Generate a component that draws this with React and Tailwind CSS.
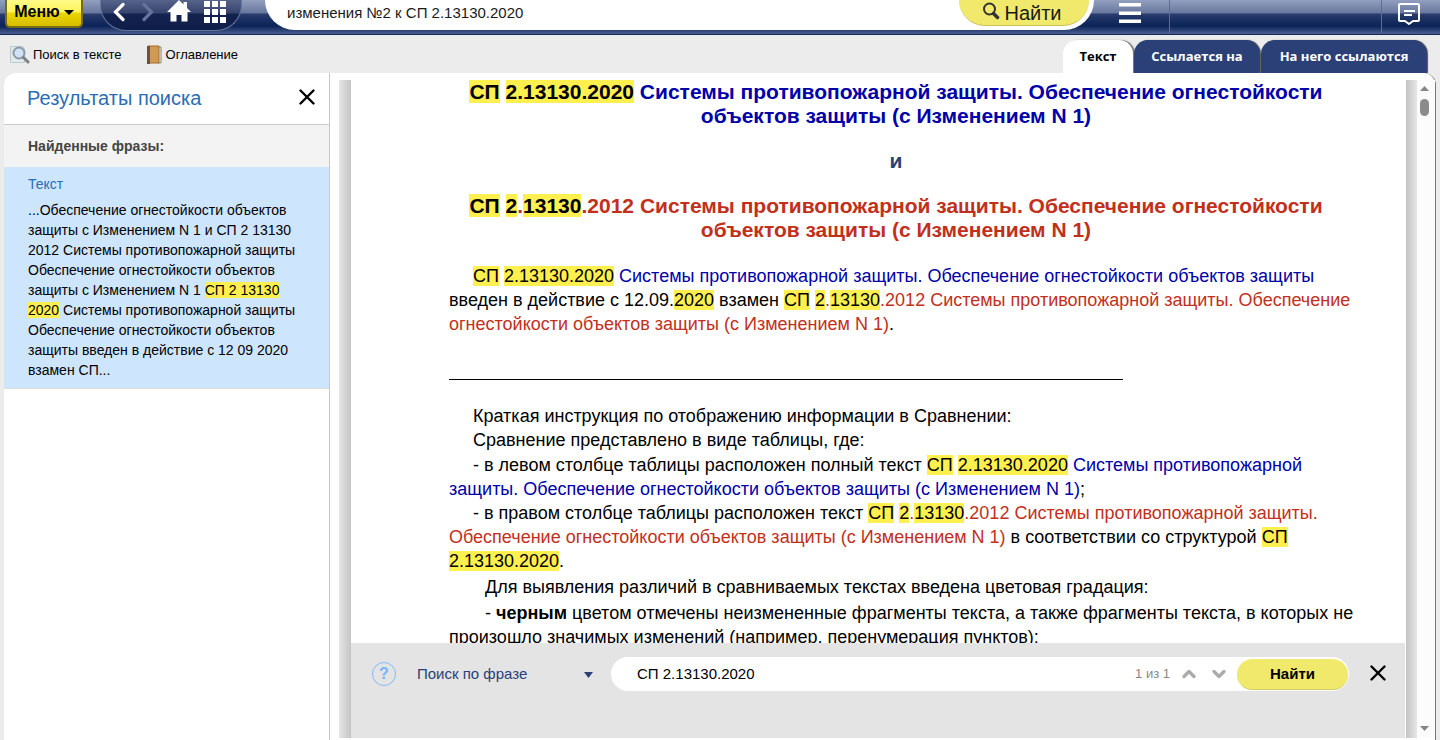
import { ChevronDown, ChevronUp } from 'lucide-react';

const LinkBlue = ({ children }) => (
    <a href="#sp2020" className="text-[#0000aa]">{children}</a>
);

const LinkRed = ({ children }) => (
    <a href="#sp2012" className="text-[#c2301c]">{children}</a>
);

const Mark = ({ children }) => <mark className="bg-[#fff04f] text-black">{children}</mark>;

const Sp2020 = () => (
    <><Mark>СП</Mark> <Mark>2.13130.2020</Mark></>
);

const Sp2012 = () => (
    <><Mark>СП</Mark> <Mark>2</Mark>.<Mark>13130</Mark>.2012</>
);

const CloseIcon = () => (
    <svg width="16" height="16" viewBox="0 0 16 16" fill="none" stroke="#000" strokeWidth="2.4" strokeLinecap="round">
        <path d="M1.5 1.5 14.5 14.5M14.5 1.5 1.5 14.5" />
    </svg>
);

const Header = () => (
    <header className="h-[35px] shrink-0 flex items-start overflow-hidden border-b border-[#14285c] bg-[linear-gradient(to_bottom,#929fbf_0px,#68779e_13px,#293c6d_14px,#0b2357_26px,#2b4073_30px,#4c608f_34px)]">
        <button className="ml-[5px] w-[78px] h-7 shrink-0 flex items-center justify-center gap-1 rounded-b-[5px] border-2 border-t-0 border-[#766c12] pb-0.5 text-base leading-6 font-bold text-black bg-[linear-gradient(to_bottom,#fffb86_0px,#fff35d_12px,#ead600_13px,#d8bd00_26px)]">
            Меню
            <svg width="10" height="5" viewBox="0 0 10 5"><path d="M0 0h10L5 5z" /></svg>
        </button>

        {/* Navigation */}
        <nav className="ml-[17px] w-[142px] h-[31px] shrink-0 flex items-start rounded-b-[26px] border border-t-0 border-[#66759d] pl-3 bg-[linear-gradient(to_bottom,#56638a_0px,#35436f_13px,#142250_14px,#0f1d49_30px)]">
            <button aria-label="Назад" className="w-3 h-6 flex items-center">
                <svg width="12" height="20" viewBox="0 0 12 20" fill="none" stroke="#fff" strokeWidth="3.2" strokeLinecap="round"><path d="M10 2.500 2.500 10 10 17.500" /></svg>
            </button>
            <button aria-label="Вперёд" className="ml-[17px] w-3 h-6 flex items-center">
                <svg width="12" height="20" viewBox="0 0 12 20" fill="none" stroke="#66739a" strokeWidth="3.2" strokeLinecap="round"><path d="M2 2.500 9.500 10 2 17.500" /></svg>
            </button>
            <button aria-label="Домой" className="ml-[13px] w-6 h-6 flex items-center">
                <svg width="24" height="24" viewBox="0 0 24 24" fill="#fff"><path d="M12 0 0 12h3.500v9.500h6V15h5v6.500h6V12H24l-4-4V2h-3.500v2.500z" /></svg>
            </button>
            <button aria-label="Все разделы" className="ml-[13px] w-6 h-6 flex items-center">
                <svg width="22" height="22" viewBox="0 0 22 22" fill="#fff">
                    <path d="M0 0h6v6H0zM8 0h6v6H8zM16 0h6v6h-6zM0 8h6v6H0zM8 8h6v6H8zM16 8h6v6h-6zM0 16h6v6H0zM8 16h6v6H8zM16 16h6v6h-6z" />
                </svg>
            </button>
        </nav>

        {/* Search */}
        <form className="ml-[23px] mr-[25px] h-[30px] min-w-0 flex-1 flex items-start rounded-b-full bg-white pl-[22px] pr-[5px]">
            <input
                type="text"
                aria-label="Поиск"
                defaultValue="изменения №2 к СП 2.13130.2020"
                className="min-w-0 flex-1 h-6 text-[15px] text-[#1a1a1a] outline-none"
            />
            <button type="button" className="w-[130px] h-[26px] shrink-0 flex items-center justify-center gap-1 rounded-b-full border-b border-[#c9c35a] bg-[#f1e96b] pr-1 text-xl leading-6 text-[#1a1a1a]">
                <svg width="18" height="18" viewBox="0 0 18 18" fill="none" stroke="#333" className="mb-1">
                    <circle cx="7.500" cy="7" r="5.500" strokeWidth="2" />
                    <path d="m11.500 11.500 4 4" strokeWidth="3.500" strokeLinecap="round" />
                </svg>
                Найти
            </button>
        </form>

        <button aria-label="Список" className="w-[50px] h-[26px] shrink-0 flex items-center">
            <svg width="22" height="20" viewBox="0 0 22 20" fill="#fff"><path d="M0 0h22v3.500H0zM0 8.500h22V12H0zM0 16.500h22V20H0z" /></svg>
        </button>
        <div className="w-[213px] h-[33px] shrink-0 border-x border-[#5d6d97]" />
        <button aria-label="Сообщения" className="w-[58px] h-[28px] shrink-0 flex items-center pl-[15px]">
            <svg width="24" height="24" viewBox="0 0 24 24" fill="none" stroke="#fff" strokeWidth="2" strokeLinejoin="round">
                <path d="M3 2h18a1 1 0 0 1 1 1v15a1 1 0 0 1-1 1h-5l-4 3-4-3H3a1 1 0 0 1-1-1V3a1 1 0 0 1 1-1zM7 9h11M7 13h8" />
            </svg>
        </button>
    </header>
);

const Toolbar = () => (
    <div className="h-[38px] shrink-0 flex items-end justify-between pl-[10px] pr-[13px]">
        <div className="h-[37px] flex items-center gap-6 text-[13px] text-black">
            <button className="flex items-center gap-[3px]">
                <svg width="20" height="20" viewBox="0 0 20 20" fill="none">
                    <path d="M.5 1.500h12l2 2v14H.5z" fill="#dfeaea" stroke="#b9cccb" />
                    <circle cx="9" cy="8" r="5.500" fill="#cfe2f6" stroke="#8d99a5" strokeWidth="2" />
                    <path d="m13.500 12.500 4.500 4.500" stroke="#7d8186" strokeWidth="3" strokeLinecap="round" />
                </svg>
                Поиск в тексте
            </button>
            <button className="flex items-center gap-[3px]">
                <svg width="17" height="20" viewBox="0 0 17 20">
                    <path d="M12 2h3v16h-3z" fill="#f3ecd9" stroke="#8f8a7d" />
                    <path d="M2 1h11v17H2z" fill="#d09a55" stroke="#a06b2c" />
                    <path d="M1 1h3v18H1z" fill="#6b543b" />
                    <path d="M15 4h1v3h-1zM15 12h1v3h-1z" fill="#a9b0a2" />
                </svg>
                Оглавление
            </button>
        </div>

        {/* Tabs */}
        <div role="tablist" className="flex gap-px font-['Open_Sans',sans-serif] text-[13px] font-bold">
            <button role="tab" aria-selected="true" className="h-[33px] w-[70px] rounded-t-[14px] bg-white text-black shadow-[2px_0_1px_#777]">Текст</button>
            <button role="tab" aria-selected="false" className="h-[33px] w-[126px] rounded-t-[14px] bg-[#2a4077] text-white shadow-[1px_0_1px_#555]">Ссылается на</button>
            <button role="tab" aria-selected="false" className="h-[33px] w-[166px] rounded-t-[14px] bg-[#2a4077] text-white shadow-[1px_0_1px_#555]">На него ссылаются</button>
        </div>
    </div>
);

const Sidebar = () => (
    <aside className="w-[326px] shrink-0 rounded-tl-xl border-r border-[#c8c8c8] bg-white">
        <div className="h-[52px] flex items-center justify-between border-b border-[#ccc] pl-[23px] pr-[14px] pb-0.5">
            <h2 className="text-xl text-[#2a6db5]">Результаты поиска</h2>
            <button aria-label="Закрыть" className="pb-0.5"><CloseIcon /></button>
        </div>
        <h3 className="h-[42px] flex items-center bg-[#f3f3f3] pl-6 text-sm font-bold text-[#444]">Найденные фразы:</h3>
        <div className="border-b border-[#ddd] bg-[#cee5fe] pl-6 pr-5 pt-[7px] pb-2 text-sm text-black">
            <a href="#text" className="block leading-5 text-[#2a6db5]">Текст</a>
            <p className="mt-[6px] leading-5">
                ...Обеспечение огнестойкости объектов защиты с Изменением N 1 и СП 2 13130 2012 Системы противопожарной защиты Обеспечение огнестойкости объектов защиты с Изменением N 1 <Mark>СП 2 13130 2020</Mark> Системы противопожарной защиты Обеспечение огнестойкости объектов защиты введен в действие с 12 09 2020 взамен СП...
            </p>
        </div>
    </aside>
);

const Article = () => (
    <article className="min-h-0 flex-1 overflow-hidden bg-white pl-[98px] pr-10 text-lg leading-6 text-black">
        <h1 className="mr-[22px] text-center text-[21px] leading-6 font-bold">
            <LinkBlue><Sp2020 /> Системы противопожарной защиты. Обеспечение огнестойкости объектов защиты (с Изменением N 1)</LinkBlue>
            <span className="my-[21px] block text-[#2a4077]">и</span>
            <LinkRed><Sp2012 /> Системы противопожарной защиты. Обеспечение огнестойкости объектов защиты (с Изменением N 1)</LinkRed>
        </h1>
        <p className="mt-[22px] indent-6">
            <LinkBlue><Sp2020 /> Системы противопожарной защиты. Обеспечение огнестойкости объектов защиты</LinkBlue> введен в действие с 12.09.<Mark>2020</Mark> взамен <LinkRed><Sp2012 /> Системы противопожарной защиты. Обеспечение огнестойкости объектов защиты (с Изменением N 1)</LinkRed>.
        </p>
        <hr className="mt-[43px] mb-6 w-[674px] border-black" />
        <p className="indent-6">Краткая инструкция по отображению информации в Сравнении:</p>
        <p className="indent-6">Сравнение представлено в виде таблицы, где:</p>
        <p className="mt-px indent-6">
            - в левом столбце таблицы расположен полный текст <LinkBlue><Sp2020 /> Системы противопожарной защиты. Обеспечение огнестойкости объектов защиты (с Изменением N 1)</LinkBlue>;
        </p>
        <p className="indent-6">
            - в правом столбце таблицы расположен текст <LinkRed><Sp2012 /> Системы противопожарной защиты. Обеспечение огнестойкости объектов защиты (с Изменением N 1)</LinkRed> в соответствии со структурой <Sp2020 />.
        </p>
        <p className="mt-0.5 indent-9">Для выявления различий в сравниваемых текстах введена цветовая градация:</p>
        <p className="mt-0.5 indent-9">
            - <b>черным</b> цветом отмечены неизмененные фрагменты текста, а также фрагменты текста, в которых не произошло значимых изменений (например, перенумерация пунктов);
        </p>
    </article>
);

const PhraseBar = () => (
    <form className="h-[95px] shrink-0 flex items-start bg-[#e4e4e4] pl-[21px] pr-[19px] pt-[14px]">
        <div className="h-[34px] flex items-center">
            <button type="button" aria-label="Справка" className="flex h-6 w-6 items-center justify-center rounded-full border border-[#82bafa] text-base font-bold text-[#74b3fb]">?</button>
        </div>
        <div className="relative ml-[21px] w-[176px] shrink-0">
            <select aria-label="Режим поиска" className="h-[34px] w-full appearance-none text-[15px] text-[#2a4077] outline-none">
                <option>Поиск по фразе</option>
            </select>
            <svg width="9" height="6" viewBox="0 0 9 6" fill="#2a4077" className="pointer-events-none absolute right-0 top-[15px]"><path d="M0 0h9L4.500 6z" /></svg>
        </div>
        <div className="ml-[18px] h-[34px] min-w-0 flex-1 flex items-center rounded-full bg-white pl-[26px] pr-px">
            <input type="text" aria-label="Фраза" defaultValue="СП 2.13130.2020" className="min-w-0 flex-1 text-[15px] text-black outline-none" />
            <span className="text-[13px] text-[#888]">1 из 1</span>
            <button type="button" aria-label="Предыдущее" className="ml-[9px]"><ChevronUp className="w-5 h-5 text-[#aaa]" strokeWidth={4} /></button>
            <button type="button" aria-label="Следующее" className="ml-[10px]"><ChevronDown className="w-5 h-5 text-[#aaa]" strokeWidth={4} /></button>
            <button type="button" className="ml-2 h-[31px] w-[111px] rounded-full border-b border-[#d3cc62] bg-[#f1e96b] pt-px text-[15px] font-bold text-black">Найти</button>
        </div>
        <button type="button" aria-label="Закрыть" className="ml-[21px] mt-2"><CloseIcon /></button>
    </form>
);

const App = () => (
    <div className="h-screen flex flex-col overflow-hidden bg-[#ececec] font-['Liberation_Sans',Arial,sans-serif]">
        <Header />
        <Toolbar />
        <div className="min-h-0 flex-1 flex pl-1 pr-1">
            <Sidebar />
            <main className="min-w-0 flex-1 flex rounded-tr-xl border-r border-[#777] bg-white pl-[9px] pt-[7px] pb-0.5">
                <div className="w-3 shrink-0 bg-linear-to-r from-[#e6e6e6] to-[#c4c4c4]" />
                <div className="min-w-0 flex-1 flex flex-col">
                    <Article />
                    <PhraseBar />
                </div>
                <div className="ml-px w-[11px] shrink-0 bg-linear-to-r from-[#c4c4c4] to-[#e6e6e6]" />

                {/* Scrollbar */}
                <div className="w-[18px] shrink-0 flex flex-col items-center bg-[#fcfcfc] pt-[6px] pb-[7px] pr-[3px]">
                    <svg width="9" height="5" viewBox="0 0 9 5" fill="#858585"><path d="M4.500 0 9 5H0z" /></svg>
                    <div className="mt-2 h-[17px] w-[9px] rounded-full bg-[#8b8b8b]" />
                    <svg width="9" height="5" viewBox="0 0 9 5" fill="#858585" className="mt-auto"><path d="M0 0h9L4.500 5z" /></svg>
                </div>
            </main>
        </div>
    </div>
);

export default App;
